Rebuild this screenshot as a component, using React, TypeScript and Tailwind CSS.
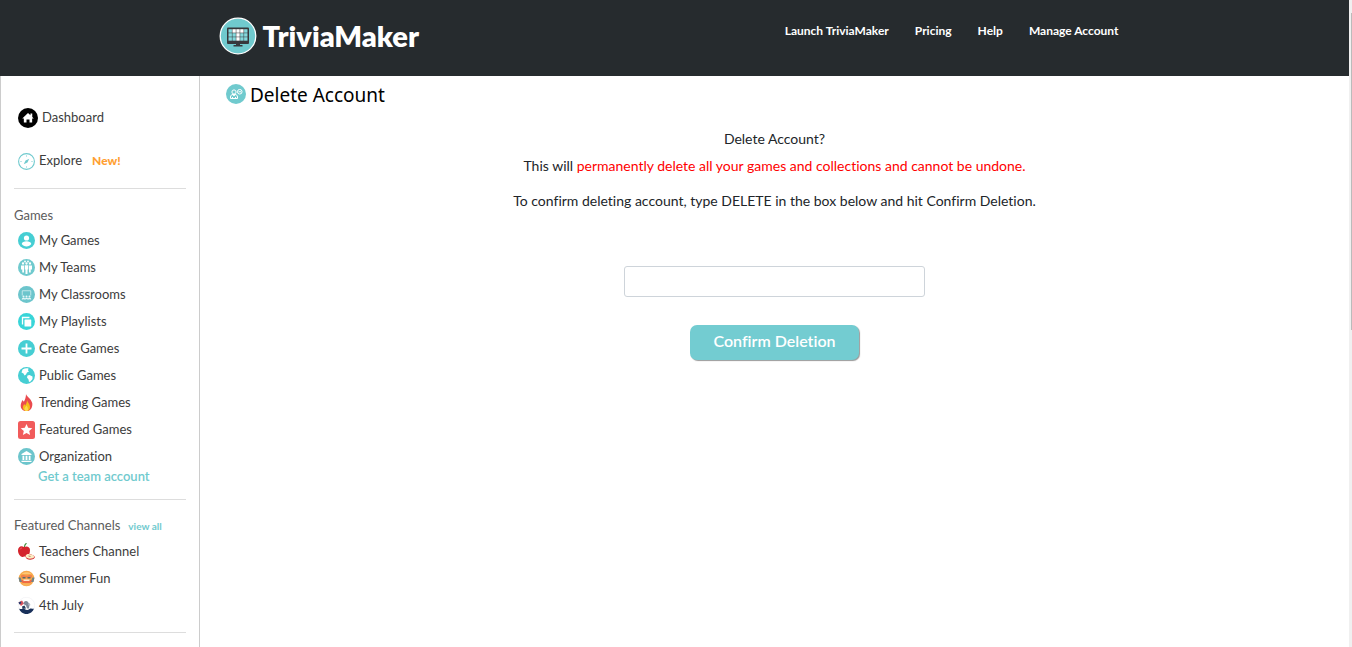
import type { ReactNode } from "react";

function Disc({ color, children }: { color: string; children: ReactNode }) {
  return (
    <svg viewBox="0 0 34 34" className="size-[17px] shrink-0" aria-hidden="true">
      <circle cx="17" cy="17" r="17" fill={color} />
      {children}
    </svg>
  );
}

function LogoMark() {
  return (
    <svg viewBox="0 0 38 38" className="size-[38px] shrink-0" aria-hidden="true">
      <circle cx="19" cy="19" r="17.8" fill="#70cace" stroke="#fff" strokeWidth="1.3" />
      <rect x="8" y="10.500" width="22" height="16.500" rx="1" fill="#37383c" />
      <g>
        {[0, 1, 2].map((r) =>
          [0, 1, 2, 3, 4].map((c) => (
            <rect
              key={`${r}-${c}`}
              x={9.5 + c * 3.9}
              y={12.2 + r * 4}
              width="3.4"
              height="3.5"
              fill={(r === 0 && c > 0 && c < 4) || c === 2 ? "#fff" : "#84d9dd"}
            />
          )),
        )}
      </g>
      <path d="M17 26h4v2h2.500v1.500h-9V28H17z" fill="#37383c" />
    </svg>
  );
}

function AccountIcon() {
  return (
    <svg viewBox="0 0 40 40" className="size-5 shrink-0" aria-hidden="true" fill="none" stroke="#fff" strokeWidth="2">
      <circle cx="20" cy="20" r="20" fill="#70cace" stroke="none" />
      <circle cx="16" cy="16" r="4.2" />
      <path d="M9 29v-3c0-3 2-5 5-5h4c3 0 5 2 5 5v3zM13 29v-3M19 29v-3M14 21l2 3 2-3" />
      <circle cx="27.500" cy="15.500" r="4.600" />
      <path d="M25 15.500h5" />
    </svg>
  );
}

function HomeIcon() {
  return (
    <svg viewBox="0 0 40 40" className="size-5 shrink-0" aria-hidden="true">
      <circle cx="20" cy="20" r="20" fill="#000" />
      <path d="M20 10 8.500 21h3.200v8H17v-6h6v6h5.300v-8h3.200l-3-3v-7h-3.600v3.600z" fill="#fff" />
    </svg>
  );
}

function CompassIcon() {
  return (
    <svg viewBox="0 0 34 34" className="size-[17px] shrink-0" aria-hidden="true">
      <circle cx="17" cy="17" r="15.800" fill="#fff" stroke="#70cace" strokeWidth="2.200" />
      <path d="M17 4v4M17 26v4M4 17h4M26 17h4" stroke="#a9dfe2" strokeWidth="1.500" />
      <path d="m22.500 11.500-3.600 7.400-7.400 3.600 3.600-7.400z" fill="#70cace" />
    </svg>
  );
}

const userIcon = (
  <Disc color="#46ced3">
    <circle cx="17" cy="12" r="5.200" fill="#fff" />
    <path d="M7.500 24c0-4 5-5.500 9.500-5.500s9.500 1.500 9.500 5.500c-2 3-5.500 5-9.500 5s-7.500-2-9.500-5z" fill="#fff" />
  </Disc>
);

const teamIcon = (
  <Disc color="#70cace">
    <g fill="#fff">
      <circle cx="14" cy="5" r="1.800" />
      <circle cx="20" cy="5" r="1.800" />
      <circle cx="10" cy="9" r="2.300" />
      <circle cx="17" cy="9" r="2.300" />
      <circle cx="24" cy="9" r="2.300" />
      <path d="M6 13h6v14H8.500v-6H6zM13.500 12.500h7V21H19v9h-4v-9h-1.500zM22 13h6v8h-2.500v6H22z" />
    </g>
  </Disc>
);

const classroomIcon = (
  <Disc color="#6cc5cc">
    <path d="M8.500 19V9.500h17V19" fill="none" stroke="#d5f0f2" strokeWidth="1.600" />
    <g fill="#e6f7f8">
      <circle cx="11" cy="21" r="2" />
      <circle cx="17" cy="21" r="2" />
      <circle cx="23" cy="21" r="2" />
      <path d="M7.500 27c0-2.500 1.500-3.500 3.500-3.500s3 1 3 2.500c0-1.500 1-2.500 3-2.500s3 1 3 2.500c0-1.500 1-2.500 3-2.500s3.500 1 3.500 3.500h-3l-.5-1-1 1h-3l-2-1-2 1h-3l-1-1-.5 1z" />
    </g>
  </Disc>
);

const playlistIcon = (
  <Disc color="#38d5d8">
    <path d="M9 23V9h14" fill="none" stroke="#fff" strokeWidth="2.600" />
    <rect x="13" y="13" width="13.500" height="14" rx="1" fill="#fff" />
  </Disc>
);

const plusIcon = (
  <Disc color="#46ced3">
    <path d="M17 7v20M7 17h20" stroke="#fff" strokeWidth="3.600" />
  </Disc>
);

const globeIcon = (
  <Disc color="#46ced3">
    <path d="M9 5c4-2.500 9-3 12-2l-1 4 2 2-4 2-2 4-3 2-2-4-4-2zM19 17l4-1 6 3v5l-4 5-3 1-1-5-3-4z" fill="#fff" />
  </Disc>
);

const flameIcon = (
  <svg viewBox="0 0 34 34" className="size-[17px] shrink-0" aria-hidden="true">
    <path d="M16 0c1 5 10 9 12.500 18 1 7-2 14-8 16h-7C7 32 4 26 6 19c1-3 2-5 3-7 1 2 2 3 3 3 2-4 4-9 4-15z" fill="#ea4b4e" />
    <path d="M18 12c1 5 6 8 6 14 0 4-2 7-5 8h-4c-4-1-6-5-5-9 .500-2 1.500-3 2.500-5 1 1 1 2 2 3 2-3 3.500-6 3.500-11z" fill="#f6bd18" />
    <path d="M17 23c1 2 3 4 3 7s-1 4-3 4-4-1-4-4 2-4 4-7z" fill="#fbd94d" />
  </svg>
);

const starIcon = (
  <svg viewBox="0 0 34 36" className="h-[18px] w-[17px] shrink-0" aria-hidden="true">
    <rect width="34" height="36" rx="5" fill="#f15b5b" />
    <path d="m17 6 3.400 7.600 8.200.8-6.200 5.500 1.800 8.100-7.200-4.200L9.800 28l1.800-8.100-6.200-5.500 8.200-.8z" fill="#fff" />
  </svg>
);

const bankIcon = (
  <Disc color="#6cc5cc">
    <path d="M17 6 7 12v2h20v-2zM9 15.500h3.500V24H9zM15.200 15.500h3.600V24h-3.600zM21.500 15.500H25V24h-3.500zM7 25.500h20V28H7z" fill="#fff" />
  </Disc>
);

const appleIcon = (
  <svg viewBox="0 0 34 34" className="size-[17px] shrink-0" aria-hidden="true">
    <path d="M12 8C6 4 0 8 0 15c0 7 5 13 9 13 2 0 2-1 4-1s3 1 5 0c4-2 6-7 6-13 0-6-6-9-12-6z" fill="#d4232b" />
    <path d="M12 8c0-3 1-6 4-8l2 1c-2 2-4 4-4 7z" fill="#3e8e36" />
    <path d="M4 13c1-2 2-3 4-3" stroke="#ef7379" strokeWidth="1.500" fill="none" />
    <path d="M15 27c1-5 7-6 12-4s8 5 6 7c-4 5-17 5-18-3z" fill="#d4232b" />
    <path d="M15 26c1-5 7-5 12-3s7 5 5 6c-5 4-16 3-17-3z" fill="#fbedc5" />
    <path d="m21 26 4 1" stroke="#9b6a3b" strokeWidth="1.500" />
  </svg>
);

const summerIcon = (
  <svg viewBox="0 0 34 34" className="size-[17px] shrink-0" aria-hidden="true">
    <circle cx="17" cy="17" r="15.500" fill="#f9a94a" />
    <path d="M7 8c5-5 15-5 20 0z" fill="#fbc878" />
    <path d="M6 11c3-2 6-2 8 0h6c2-2 5-2 8 0v4H6z" fill="#f0804c" />
    <path d="M1 15h4l2 5h20l2-5h4l-2 9H3z" fill="#6d8389" />
    <path d="M9 14h6v3H9zM19 14h6v3h-6z" fill="#5a696d" />
    <path d="M6 20h22l-3 6H9z" fill="#ef6a45" />
    <path d="M11 19h12v3H11z" fill="#fde9d2" />
    <path d="M8 27h18c-4 6-14 6-18 0z" fill="#f7b15b" />
  </svg>
);

const julyIcon = (
  <svg viewBox="0 0 34 34" className="size-[17px] shrink-0" aria-hidden="true">
    <circle cx="17" cy="17" r="16.500" fill="#fff" stroke="#ececf0" />
    <path d="M2 23c4 3 7-1 11 1s6 3 10 0 6 1 9-1c-2 6-8 11-15 11S4 29 2 23z" fill="#18305a" />
    <path d="m1 11 7-4 4 6-6 5z" fill="#d9515b" />
    <path d="m1 11 4-2 2 3-4 3z" fill="#263c70" />
    <path d="M12 10c2-3 6-3 8 0l3 5-1 8h-4l-2-6-5-3z" fill="#7e8798" />
    <path d="m8 19 5-2 3 6-7 1z" fill="#263c5c" />
    <path d="m20 14 3-2 2 4-3 2z" fill="#b3bac7" />
  </svg>
);

const games: [string, ReactNode][] = [
  ["My Games", userIcon],
  ["My Teams", teamIcon],
  ["My Classrooms", classroomIcon],
  ["My Playlists", playlistIcon],
  ["Create Games", plusIcon],
  ["Public Games", globeIcon],
  ["Trending Games", flameIcon],
  ["Featured Games", starIcon],
  ["Organization", bankIcon],
];

const channels: [string, ReactNode][] = [
  ["Teachers Channel", appleIcon],
  ["Summer Fun", summerIcon],
  ["4th July", julyIcon],
];

function NavList({ items }: { items: [string, ReactNode][] }) {
  return (
    <ul className="mt-0.5 pl-1">
      {items.map(([label, icon]) => (
        <li key={label}>
          <a href="#" className="flex h-[27px] items-center gap-1">
            {icon}
            {label}
          </a>
        </li>
      ))}
    </ul>
  );
}

function Sidebar() {
  return (
    <aside className="w-[200px] shrink-0 border-x border-[#ccc] px-[13px] pt-8 text-[13px] text-[#3c3c3c]">
      <a href="#" className="flex h-5 items-center gap-1 pl-1">
        <HomeIcon />
        Dashboard
      </a>
      <a href="#" className="mt-[23px] flex h-5 items-center gap-1 pl-1">
        <CompassIcon />
        Explore
        <span className="ml-1.5 text-[12px] font-black text-[#ffa033]">New!</span>
      </a>
      <hr className="mt-[17px] border-[#ddd]" />
      <h2 className="mt-4 h-5 leading-5 text-[#5c5c5c]">Games</h2>
      <NavList items={games} />
      <a href="#" className="block pl-6 font-semibold leading-3 text-[#70cace]">
        Get a team account
      </a>
      <hr className="mt-[17px] border-[#ddd]" />
      <h2 className="mt-4 flex h-5 items-center gap-2 text-[#5c5c5c]">
        Featured Channels
        <a href="#" className="text-[10px] font-bold text-[#70cace]">
          view all
        </a>
      </h2>
      <NavList items={channels} />
      <hr className="mt-[13px] border-[#ddd]" />
    </aside>
  );
}

export default function App() {
  return (
    <div className="flex h-screen overflow-hidden bg-white font-[Lato,sans-serif] text-[#212529] [font-variant-ligatures:no-common-ligatures]">
      <div className="flex min-w-0 flex-1 flex-col">
        <header className="h-[76px] shrink-0 bg-[#262b2e] text-white">
          <div className="mx-auto flex max-w-[912px] items-start justify-between pr-3">
            <a href="#" className="mt-[17px] flex items-center gap-1.5 text-[29px] leading-[38px] font-extrabold">
              <LogoMark />
              TriviaMaker
            </a>
            <nav className="mt-[21px] flex gap-[26px] text-[12px] leading-5 font-bold">
              <a href="#">Launch TriviaMaker</a>
              <a href="#">Pricing</a>
              <a href="#">Help</a>
              <a href="#">Manage Account</a>
            </nav>
          </div>
        </header>
        <div className="flex min-h-0 flex-1">
          <Sidebar />
          <main className="min-w-0 flex-1">
            <h1 className="mt-2 flex items-start gap-1 pl-[26px] font-['Noto_Sans',sans-serif] text-[19px] leading-[22px] text-black">
              <AccountIcon />
              Delete Account
            </h1>
            <form className="flex flex-col items-center text-center text-[14px] leading-[27px]" onSubmit={(e) => e.preventDefault()}>
              <p className="mt-[19px]">Delete Account?</p>
              <p>
                This will{" "}
                <span className="text-[#ff0000]">permanently delete all your games and collections and cannot be undone.</span>
              </p>
              <label htmlFor="confirm" className="mt-2">
                To confirm deleting account, type DELETE in the box below and hit Confirm Deletion.
              </label>
              <input
                id="confirm"
                type="text"
                className="mt-[52px] h-[31px] w-[301px] rounded-[3px] border border-[#ced4da] px-3 outline-none"
              />
              <button
                type="submit"
                className="mt-7 h-[35px] w-[169px] rounded-[7px] bg-[#73ccd1] pb-1 text-[16px] leading-5 font-semibold text-white shadow-[1px_1px_1px_#999]"
              >
                Confirm Deletion
              </button>
            </form>
          </main>
        </div>
      </div>
      <div className="flex w-[3px] shrink-0 justify-end bg-[#f0f0f0] pt-[13px]" aria-hidden="true">
        <div className="h-1/2 w-px bg-[#bbb]" />
      </div>
    </div>
  );
}
